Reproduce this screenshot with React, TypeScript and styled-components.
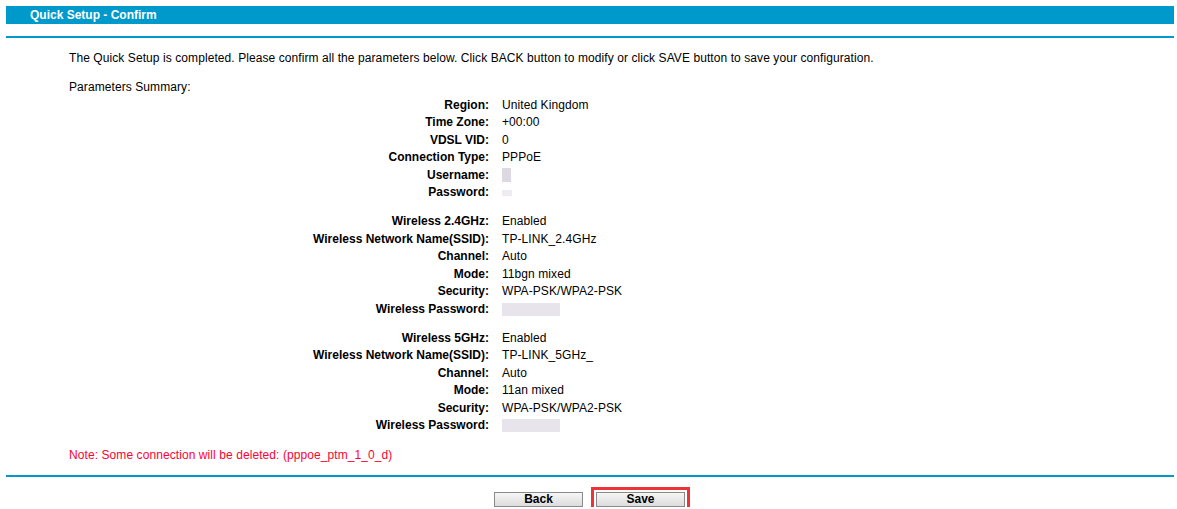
import React from 'react';
import styled, { createGlobalStyle } from 'styled-components';

const GlobalStyle = createGlobalStyle`
  body {
    margin: 0;
    background: #fff;
    font-family: Arial, "Liberation Sans", sans-serif;
    font-size: 12px;
    color: #000;
  }
`;

const Page = styled.div`
  padding: 6px 3px 0 6px;
`;

const TitleBar = styled.div`
  height: 18px;
  line-height: 18px;
  padding-left: 24px;
  background: #0099cc;
  color: #fff;
  font-weight: bold;
`;

const Rule = styled.div<{ $top: number }>`
  height: 2px;
  margin-top: ${(p) => p.$top}px;
  background: #0099cc;
`;

const Content = styled.div`
  padding: 12px 0 0 63px;
`;

const Para = styled.p<{ $color?: string; $gap?: number }>`
  margin: ${(p) => p.$gap ?? 0}px 0 0;
  line-height: 17.5px;
  letter-spacing: 0.08px;
  color: ${(p) => p.$color ?? '#000'};
`;

const Summary = styled.div`
  display: grid;
  grid-template-columns: 420px 1fr;
  column-gap: 13px;
`;

const Group = styled.div`
  display: contents;
`;

const Label = styled.div<{ $first?: boolean }>`
  text-align: right;
  font-weight: bold;
  line-height: 17.5px;
  margin-top: ${(p) => (p.$first ? 11.5 : 0)}px;
`;

const Value = styled.div<{ $first?: boolean }>`
  line-height: 17.5px;
  letter-spacing: 0.08px;
  margin-top: ${(p) => (p.$first ? 11.5 : 0)}px;
  display: flex;
  align-items: center;
`;

const Blur = styled.span<{ $w: number; $h: number; $shade: string }>`
  display: inline-block;
  width: ${(p) => p.$w}px;
  height: ${(p) => p.$h}px;
  background: ${(p) => p.$shade};
`;

const ButtonRow = styled.div`
  display: flex;
  justify-content: center;
  gap: 13px;
  padding-top: 15px;
  padding-right: 1px;
`;

const Button = styled.button<{ $highlight?: boolean }>`
  width: 89px;
  height: 15px;
  padding: 0;
  border: 1px solid #8a8a8a;
  border-radius: 0;
  background: linear-gradient(#f6f6f6, #dcdcdc);
  font-family: Arial, "Liberation Sans", sans-serif;
  font-size: 12px;
  font-weight: bold;
  line-height: 13px;
  color: #000;
  outline: ${(p) => (p.$highlight ? '3px solid #ee3338' : 'none')};
  outline-offset: 2px;
`;

type Row = { label: string; value?: string; blur?: [number, number, string] };

const groups: Row[][] = [
  [
    { label: 'Region:', value: 'United Kingdom' },
    { label: 'Time Zone:', value: '+00:00' },
    { label: 'VDSL VID:', value: '0' },
    { label: 'Connection Type:', value: 'PPPoE' },
    { label: 'Username:', blur: [9, 14, '#dcd9e2'] },
    { label: 'Password:', blur: [10, 6, '#eeecf0'] },
  ],
  [
    { label: 'Wireless 2.4GHz:', value: 'Enabled' },
    { label: 'Wireless Network Name(SSID):', value: 'TP-LINK_2.4GHz' },
    { label: 'Channel:', value: 'Auto' },
    { label: 'Mode:', value: '11bgn mixed' },
    { label: 'Security:', value: 'WPA-PSK/WPA2-PSK' },
    { label: 'Wireless Password:', blur: [58, 13, '#e7e4eb'] },
  ],
  [
    { label: 'Wireless 5GHz:', value: 'Enabled' },
    { label: 'Wireless Network Name(SSID):', value: 'TP-LINK_5GHz_' },
    { label: 'Channel:', value: 'Auto' },
    { label: 'Mode:', value: '11an mixed' },
    { label: 'Security:', value: 'WPA-PSK/WPA2-PSK' },
    { label: 'Wireless Password:', blur: [58, 13, '#e7e4eb'] },
  ],
];

function App() {
  return (
    <Page>
      <GlobalStyle />
      <TitleBar>Quick Setup - Confirm</TitleBar>
      <Rule $top={12} />
      <Content>
        <Para>
          The Quick Setup is completed. Please confirm all the parameters below. Click BACK button to modify or
          click SAVE button to save your configuration.
        </Para>
        <Para $gap={11.5}>Parameters Summary:</Para>
        <Summary>
          {groups.map((rows, gi) => (
            <Group key={gi}>
              {rows.map((r, i) => (
                <React.Fragment key={r.label + i}>
                  <Label $first={gi > 0 && i === 0}>{r.label}</Label>
                  <Value $first={gi > 0 && i === 0}>
                    {r.value ?? <Blur $w={r.blur![0]} $h={r.blur![1]} $shade={r.blur![2]} />}
                  </Value>
                </React.Fragment>
              ))}
            </Group>
          ))}
        </Summary>
        <Para $color="#ff0033" $gap={12.5}>
          Note: Some connection will be deleted: (pppoe_ptm_1_0_d)
        </Para>
      </Content>
      <Rule $top={10} />
      <ButtonRow>
        <Button>Back</Button>
        <Button $highlight>Save</Button>
      </ButtonRow>
    </Page>
  );
}

export default App;
